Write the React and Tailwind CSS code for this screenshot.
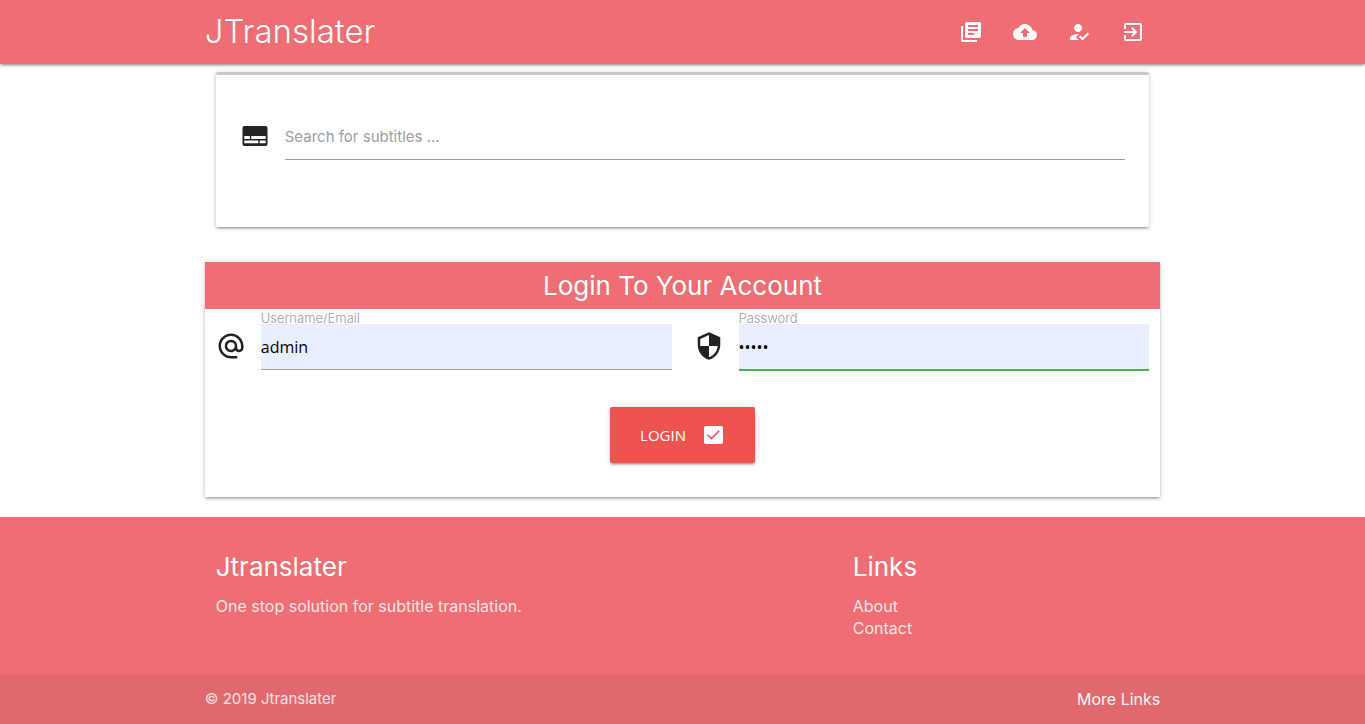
import { useState } from "react";
import {
  MdLibraryBooks,
  MdBackup,
  MdHowToReg,
  MdExitToApp,
  MdAlternateEmail,
  MdSecurity,
} from "react-icons/md";

const navLinks = [
  { label: "Library", icon: MdLibraryBooks },
  { label: "Upload", icon: MdBackup },
  { label: "Register", icon: MdHowToReg },
  { label: "Login", icon: MdExitToApp },
];

const cardShadow =
  "shadow-[0_2px_2px_0_rgba(0,0,0,0.14),0_3px_1px_-2px_rgba(0,0,0,0.12),0_1px_5px_0_rgba(0,0,0,0.2)]";

function SubtitlesIcon({ className }) {
  return (
    <svg viewBox="0 0 24 24" className={className} aria-hidden="true">
      <rect x="2" y="4" width="20" height="16" rx="1.6" fill="currentColor" />
      <path fill="#fff" d="M3.4 12h4.5v2.3H3.4zM9 12h11.5v2.3H9zM3.4 15.5h11.2v2.3H3.4zM15.7 15.5h4.8v2.3h-4.8z" />
    </svg>
  );
}

function CheckBoxIcon({ className }) {
  return (
    <svg viewBox="0 0 24 24" className={className} aria-hidden="true">
      <rect x="3" y="3" width="19" height="18" rx="1.8" fill="currentColor" />
      <path fill="none" stroke="#e2555c" strokeWidth="1.6" d="M6.6 11.8l3.8 3.8 7.8-7.8" />
    </svg>
  );
}

function Navbar() {
  return (
    <nav className={`relative bg-[#ee6e73] text-white ${cardShadow}`}>
      <div className="mx-auto flex h-16 w-[70%] items-center justify-between">
        <a href="#" className="text-[33px] font-light">JTranslater</a>
        <ul className="flex">
          {navLinks.map(({ label, icon: Icon }) => (
            <li key={label}>
              <a href="#" aria-label={label} className="block px-[15px]">
                <Icon className="size-6" />
              </a>
            </li>
          ))}
        </ul>
      </div>
    </nav>
  );
}

function SearchCard() {
  return (
    <section className={`mx-[11px] mt-2 rounded-xs border-t-3 border-[#c9c9c9] bg-white px-6 pt-[39px] pb-[67px] ${cardShadow}`}>
      <div className="flex items-center">
        <label htmlFor="search" aria-label="Search" className="w-[45px] shrink-0 pb-0.5">
          <SubtitlesIcon className="size-[30px]" />
        </label>
        <input id="search" type="text" placeholder="Search for subtitles ..."
          className="h-[46px] min-w-0 flex-1 border-b border-[#9e9e9e] text-[15px] outline-none placeholder:text-[#9e9e9e]" />
      </div>
    </section>
  );
}

function Field({ id, label, icon: Icon, type, value, onChange, border }) {
  return (
    <div className="grid grid-cols-[45px_1fr] px-[11px]">
      <label htmlFor={id} className="col-start-2 h-[15px] text-[13px] leading-[18px] font-light text-[#9e9e9e]">
        {label}
      </label>
      <Icon className="col-start-1 mt-[7px] size-[30px]" />
      <input id={id} type={type} value={value} onChange={onChange}
        className={`h-[46px] w-full min-w-0 border-b bg-[#e8f0fe] font-['Open_Sans',sans-serif] text-[16px] text-black outline-none ${border}`} />
    </div>
  );
}

function LoginCard() {
  const [username, setUsername] = useState("admin");
  const [password, setPassword] = useState("admin");

  return (
    <section className={`mt-[35px] mb-5 bg-white pb-[34px] ${cardShadow}`}>
      <h2 className="bg-[#ee6e73] text-center text-[26px] leading-[47px] text-white">Login To Your Account</h2>
      <form onSubmit={(e) => e.preventDefault()}>
        <div className="grid grid-cols-2">
          <Field id="username" label="Username/Email" icon={MdAlternateEmail} type="text" value={username}
            onChange={(e) => setUsername(e.target.value)} border="border-[#9e9e9e]" />
          <Field id="password" label="Password" icon={MdSecurity} type="password" value={password}
            onChange={(e) => setPassword(e.target.value)} border="border-[#4caf50] shadow-[0_1px_0_0_#4caf50]" />
        </div>
        <button type="submit"
          className={`mx-auto mt-[37px] flex h-14 items-center gap-[15px] rounded-xs bg-[#ef5350] px-[30px] font-['Open_Sans',sans-serif] text-[15px] text-white ${cardShadow}`}>
          LOGIN
          <CheckBoxIcon className="size-6" />
        </button>
      </form>
    </section>
  );
}

function Footer() {
  return (
    <footer className="bg-[#ee6e73] text-[16px] leading-[22px] text-white">
      <div className="mx-auto grid w-[70%] grid-cols-3 pt-8 pb-[35px]">
        <div className="col-span-2 px-[11px]">
          <h5 className="mb-[10px] text-[26px] leading-9">Jtranslater</h5>
          <p className="text-[#fbe5e5]">One stop solution for subtitle translation.</p>
        </div>
        <div className="px-[11px]">
          <h5 className="mb-[10px] text-[26px] leading-9">Links</h5>
          <ul className="text-[#fbe5e5]">
            <li><a href="#">About</a></li>
            <li><a href="#">Contact</a></li>
          </ul>
        </div>
      </div>
      <div className="bg-[#333333]/8">
        <div className="mx-auto flex h-[50px] w-[70%] items-center justify-between">
          <span className="text-[15px] text-white/80">© 2019 Jtranslater</span>
          <a href="#" className="text-[#f5f5f5]">More Links</a>
        </div>
      </div>
    </footer>
  );
}

export default function App() {
  return (
    <div className="bg-white font-['Inter',sans-serif] text-[#222222]">
      <Navbar />
      <main className="mx-auto w-[70%]">
        <SearchCard />
        <LoginCard />
      </main>
      <Footer />
    </div>
  );
}
